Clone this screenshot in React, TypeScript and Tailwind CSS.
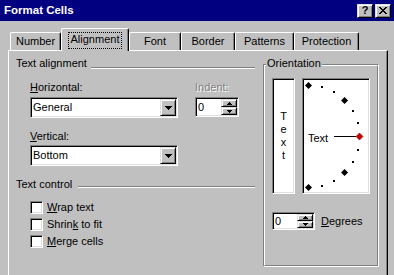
const sunken =
  "border border-t-[#808080] border-l-[#808080] border-b-white border-r-white shadow-[inset_1px_1px_0_#000,inset_-1px_-1px_0_#dfdfdf] bg-white p-[1px]";
const raised =
  "bg-[#c0c0c0] border border-t-[#dfdfdf] border-l-[#dfdfdf] border-b-black border-r-black shadow-[inset_1px_1px_0_#fff,inset_-1px_-1px_0_#808080]";

function DownArrow() {
  return (
    <svg width="7" height="4" viewBox="0 0 7 4" shapeRendering="crispEdges">
      <path d="M0 0h7v1H0zM1 1h5v1H1zM2 2h3v1H2zM3 3h1v1H3z" fill="#000" />
    </svg>
  );
}

function Combo({ value }: { value: string }) {
  return (
    <div className={`${sunken} w-[148px] h-[21px] flex items-stretch`}>
      <span className="flex-1 pl-[1px] flex items-center">{value}</span>
      <div className={`${raised} w-[16px] flex items-center justify-center`}>
        <DownArrow />
      </div>
    </div>
  );
}

function SpinArrow({ up }: { up?: boolean }) {
  return (
    <svg width="5" height="3" viewBox="0 0 5 3" shapeRendering="crispEdges">
      {up ? (
        <path d="M2 0h1v1H2zM1 1h3v1H1zM0 2h5v1H0z" fill="#000" />
      ) : (
        <path d="M0 0h5v1H0zM1 1h3v1H1zM2 2h1v1H2z" fill="#000" />
      )}
    </svg>
  );
}

function Spin({ w, h }: { w: string; h: string }) {
  return (
    <div className={`${sunken} ${w} ${h} flex items-stretch`}>
      <span className="flex-1 pl-[1px] flex items-center">0</span>
      <div className="w-[16px] flex flex-col">
        <div className={`${raised} flex-1 flex items-center justify-center`}>
          <SpinArrow up />
        </div>
        <div className={`${raised} flex-1 flex items-center justify-center`}>
          <SpinArrow />
        </div>
      </div>
    </div>
  );
}

function Check({ children }: { children: React.ReactNode }) {
  return (
    <div className="flex items-start h-[17px]">
      <div className={`${sunken} w-[13px] h-[13px]`} />
      <span className="ml-[4px]">{children}</span>
    </div>
  );
}

function Tab({ label, w }: { label: string; w: string }) {
  return (
    <div
      className={`${w} h-[18px] border-t border-l border-white border-r border-r-black rounded-t-[2px] shadow-[inset_-1px_0_0_#808080] flex items-center justify-center`}
    >
      {label}
    </div>
  );
}

function Dial() {
  const cx = 4.5;
  const cy = 56.5;
  const r = 51;
  const big = [90, 45, -45, -90];
  const small = [75, 60, 30, 15, -15, -30, -60, -75];
  const pt = (a: number) => {
    const rad = (a * Math.PI) / 180;
    return [cx + r * Math.cos(rad), cy - r * Math.sin(rad)];
  };
  const diamond = (x: number, y: number) =>
    `${x},${y - 3.5} ${x + 3.5},${y} ${x},${y + 3.5} ${x - 3.5},${y}`;
  return (
    <svg width="64" height="112" viewBox="0 0 64 112">
      {big.map((a) => {
        const [x, y] = pt(a);
        return <polygon key={a} points={diamond(x, y)} fill="#000" />;
      })}
      {small.map((a) => {
        const [x, y] = pt(a);
        return (
          <rect
            key={a}
            x={Math.round(x) - 1}
            y={Math.round(y) - 1}
            width="2"
            height="2"
            fill="#000"
            shapeRendering="crispEdges"
          />
        );
      })}
      <rect x="30" y="56" width="22" height="1" fill="#000" shapeRendering="crispEdges" />
      <polygon points={diamond(55.5, 56.5)} fill="#cc0000" stroke="#7a0000" strokeWidth="0.6" />
      <text x="4" y="62" fontSize="11" fontFamily="'Liberation Sans', Arial, sans-serif" fill="#000">
        Text
      </text>
    </svg>
  );
}

export default function App() {
  return (
    <div className="w-[394px] h-[275px] overflow-hidden bg-[#c0c0c0] font-['Liberation_Sans',Arial,sans-serif] text-[11px] leading-[13px] text-black">
      <div className="h-[21px] bg-[#000080] flex items-center justify-between pl-[4px] pr-[3px]">
        <span className="font-bold text-white text-[11.5px]">Format Cells</span>
        <div className="flex gap-[2px]">
          <div className={`${raised} w-[16px] h-[14px] flex items-center justify-center font-bold text-[11px] leading-none`}>
            ?
          </div>
          <div className={`${raised} w-[16px] h-[14px] flex items-center justify-center`}>
            <svg width="8" height="7" viewBox="0 0 8 7" shapeRendering="crispEdges">
              <path
                d="M0 0h2v1H0zM6 0h2v1H6zM1 1h2v1H1zM5 1h2v1H5zM2 2h4v1H2zM3 3h2v1H3zM2 4h4v1H2zM1 5h2v1H1zM5 5h2v1H5zM0 6h2v1H0zM6 6h2v1H6z"
                fill="#000"
              />
            </svg>
          </div>
        </div>
      </div>

      <div className="pl-[8px] pt-[7px]">
        <div className="flex items-end h-[22px] pl-[2px]">
          <Tab label="Number" w="w-[51px]" />
          <div className="w-[68px] h-[23px] -mb-px relative z-10 bg-[#c0c0c0] border-t border-l border-white border-r border-r-black rounded-t-[2px] shadow-[inset_-1px_0_0_#808080] flex justify-center pt-[3px]">
            <span className="h-[17px] px-[2px] border border-dotted border-black">Alignment</span>
          </div>
          <Tab label="Font" w="w-[52px]" />
          <Tab label="Border" w="w-[54px]" />
          <Tab label="Patterns" w="w-[59px]" />
          <Tab label="Protection" w="w-[65px]" />
        </div>

        <div className="w-[380px] h-[300px] border-t border-l border-white border-r border-r-black shadow-[inset_-1px_0_0_#808080] flex">
          <div className="w-[246px] pt-[6px]">
            <div className="flex pl-[7px]">
              <span>Text alignment</span>
              <div className="flex-1 ml-[4px] mt-[10px] h-[2px] border-t border-t-[#808080] border-b border-b-white" />
            </div>

            <div className="flex pl-[21px] mt-[11px]">
              <div>
                <div>
                  <u>H</u>orizontal:
                </div>
                <div className="mt-[3px]">
                  <Combo value="General" />
                </div>
              </div>
              <div className="ml-[17px]">
                <div className="text-[#808080] [text-shadow:1px_1px_0_#fff]">Indent:</div>
                <div className="mt-[3px]">
                  <Spin w="w-[44px]" h="h-[20px]" />
                </div>
              </div>
            </div>

            <div className="pl-[21px] mt-[12px]">
              <div>
                <u>V</u>ertical:
              </div>
              <div className="mt-[2px]">
                <Combo value="Bottom" />
              </div>
            </div>

            <div className="flex pl-[7px] mt-[12px]">
              <span>Text control</span>
              <div className="flex-1 ml-[6px] mt-[8px] h-[2px] border-t border-t-[#808080] border-b border-b-white" />
            </div>

            <div className="pl-[21px] mt-[10px]">
              <Check>
                <u>W</u>rap text
              </Check>
              <Check>
                Shrin<u>k</u> to fit
              </Check>
              <Check>
                <u>M</u>erge cells
              </Check>
            </div>
          </div>

          <div className="ml-[8px] mt-[13px]">
            <div className="relative w-[116px] h-[203px] border border-t-[#808080] border-l-[#808080] border-b-white border-r-white">
              <div className="h-full border border-t-white border-l-white border-b-[#808080] border-r-[#808080] pl-[7px] pt-[12px]">
                <div className="flex gap-[7px]">
                  <div className={`${sunken} w-[23px] h-[116px] flex flex-col items-center pt-[31px]`}>
                    <span>T</span>
                    <span>e</span>
                    <span>x</span>
                    <span>t</span>
                  </div>
                  <div className={`${sunken} w-[68px] h-[116px]`}>
                    <Dial />
                  </div>
                </div>
                <div className="flex items-center mt-[18px]">
                  <Spin w="w-[43px]" h="h-[18px]" />
                  <span className="ml-[6px]">
                    <u>D</u>egrees
                  </span>
                </div>
              </div>
              <span className="absolute left-[2px] -top-[8px] px-[1px] bg-[#c0c0c0]">Orientation</span>
            </div>
          </div>
        </div>
      </div>
    </div>
  );
}
